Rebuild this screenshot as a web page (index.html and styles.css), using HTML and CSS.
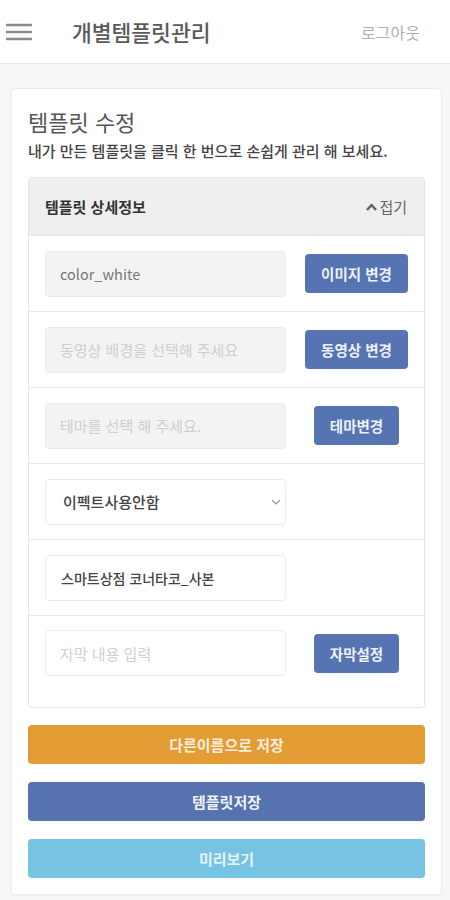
FILE: index.html
```html
<!DOCTYPE html>
<html lang="ko">
<head>
<meta charset="utf-8">
<link rel="stylesheet" href="styles.css">
</head>
<body>
<header class="topbar">
  <button class="menu" aria-label="menu">
    <svg width="28" height="20" viewBox="0 0 28 20"><g stroke="#8a8a8a" stroke-width="2.4" stroke-linecap="round"><line x1="2" y1="3" x2="26" y2="3"/><line x1="2" y1="10" x2="26" y2="10"/><line x1="2" y1="17" x2="26" y2="17"/></g></svg>
  </button>
  <h1 class="app-title">개별템플릿관리</h1>
  <a class="logout">로그아웃</a>
</header>
<main class="page">
  <section class="card">
    <h2 class="card-title">템플릿 수정</h2>
    <p class="card-sub">내가 만든 템플릿을 클릭 한 번으로 손쉽게 관리 해 보세요.</p>
    <div class="panel">
      <div class="panel-head">
        <span class="panel-name">템플릿 상세정보</span>
        <span class="fold"><svg width="13" height="10" viewBox="0 0 13 10"><path d="M2 8 L6.5 3 L11 8" fill="none" stroke="#666" stroke-width="2.6" stroke-linejoin="round"/></svg>접기</span>
      </div>
      <div class="row">
        <div class="field disabled latin">color_white</div>
        <div class="act"><button class="btn-sm wide">이미지 변경</button></div>
      </div>
      <div class="row">
        <div class="field disabled ph">동영상 배경을 선택해 주세요</div>
        <div class="act"><button class="btn-sm wide">동영상 변경</button></div>
      </div>
      <div class="row">
        <div class="field disabled ph">테마를 선택 해 주세요.</div>
        <div class="act"><button class="btn-sm">테마변경</button></div>
      </div>
      <div class="row">
        <div class="field select">이펙트사용안함
          <svg width="10" height="6" viewBox="0 0 10 6"><path d="M1 1 L5 5 L9 1" fill="none" stroke="#999" stroke-width="1.2"/></svg>
        </div>
      </div>
      <div class="row">
        <div class="field strong">스마트상점 코너타코_사본</div>
      </div>
      <div class="row last">
        <div class="field ph">자막 내용 입력</div>
        <div class="act"><button class="btn-sm">자막설정</button></div>
      </div>
    </div>
    <div class="actions">
      <button class="btn-lg orange">다른이름으로 저장</button>
      <button class="btn-lg blue">템플릿저장</button>
      <button class="btn-lg sky">미리보기</button>
    </div>
  </section>
</main>
</body>
</html>
```

FILE: styles.css
```css
* { box-sizing: border-box; }
body {
  margin: 0;
  background: #f7f7f7;
  font-family: "Noto Sans CJK KR", "Noto Sans", Roboto, sans-serif;
  color: #444;
}
.topbar {
  height: 64px;
  background: #fff;
  border-bottom: 1px solid #ececec;
  display: flex;
  align-items: center;
  padding: 0 30px 0 4px;
}
.menu {
  border: 0;
  background: none;
  padding: 0;
  width: 30px;
  height: 24px;
  display: flex;
  align-items: center;
  justify-content: center;
}
.app-title {
  margin: 0 0 0 38px;
  font-size: 21.5px;
  font-weight: 500;
  color: #5a5a5a;
  flex: 1;
}
.logout {
  font-size: 16px;
  color: #b0b0b0;
}
.page {
  padding: 24px 8px 5px 11px;
}
.card {
  background: #fff;
  border: 1px solid #ececec;
  border-radius: 4px;
  padding: 16px;
  box-shadow: 0 1px 2px rgba(0,0,0,0.04);
}
.card-title {
  margin: 0;
  font-size: 22px;
  line-height: 32px;
  font-weight: 400;
  color: #555;
}
.card-sub {
  margin: 4px 0 16px;
  font-size: 15px;
  line-height: 20px;
  font-weight: 500;
  color: #444;
  white-space: nowrap;
}
.panel {
  border: 1px solid #e6e6e6;
  border-radius: 4px;
  overflow: hidden;
}
.panel-head {
  height: 58px;
  background: #efefef;
  display: flex;
  align-items: center;
  justify-content: space-between;
  padding: 0 17px 0 16px;
  border-bottom: 1px solid #e6e6e6;
}
.panel-name {
  font-size: 15px;
  font-weight: 700;
  color: #333;
}
.fold {
  font-size: 15px;
  color: #666;
  display: flex;
  align-items: center;
  gap: 1px;
}
.row {
  height: 76px;
  display: flex;
  align-items: center;
  padding: 0 0 0 16px;
  border-bottom: 1px solid #ececec;
}
.row.last {
  height: 91px;
  align-items: flex-start;
  padding-top: 14px;
  border-bottom: 0;
}
.field {
  width: 241px;
  height: 46px;
  border: 1px solid #ececec;
  border-radius: 4px;
  display: flex;
  align-items: center;
  padding: 0 14px;
  font-size: 15px;
  color: #777;
  background: #fff;
}
.field.latin { font-size: 14.5px; }
.field.disabled { background: #f3f3f3; }
.field.ph { color: #cfcfcf; }
.field.select {
  justify-content: space-between;
  color: #444;
  font-weight: 500;
  padding: 0 4px 0 17px;
}
.field.strong { color: #444; font-weight: 500; font-size: 14px; padding-left: 15px; }
.act {
  flex: 1;
  display: flex;
  justify-content: center;
  padding-left: 3px;
}
.row.last .act { padding-top: 4px; }
.btn-sm {
  border: 0;
  border-radius: 4px;
  background: #5674b2;
  color: #eef2fa;
  font-family: inherit;
  font-size: 14.5px;
  font-weight: 700;
  height: 39px;
  width: 85px;
  padding: 0;
}
.btn-sm.wide { width: 103px; }
.actions {
  display: flex;
  flex-direction: column;
  gap: 18px;
  margin-top: 17px;
}
.btn-lg {
  border: 0;
  border-radius: 4px;
  height: 39px;
  width: 100%;
  font-family: inherit;
  font-size: 15px;
  font-weight: 700;
  color: #fff;
}
.btn-lg.orange { background: #e49c35; color: #fbeede; }
.btn-lg.blue { background: #5673b0; color: #eef1f8; }
.btn-lg.sky { background: #77c3e3; color: #e6f4fb; }
```
